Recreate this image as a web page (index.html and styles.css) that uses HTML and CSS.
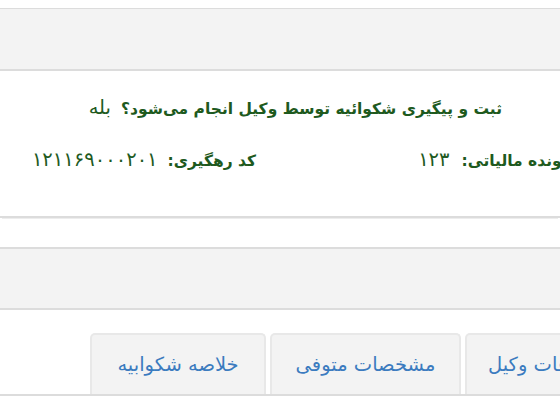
FILE: index.html
```html
<!DOCTYPE html>
<html lang="fa" dir="rtl">
<head>
<meta charset="utf-8">
<link rel="stylesheet" href="styles.css">
</head>
<body>
<div class="page">
  <div class="band band-top"></div>
  <div class="info">
    <div class="question">
      <span class="label">ثبت و پیگیری شکوائیه توسط وکیل انجام می‌شود؟</span>
      <span class="value">بله</span>
    </div>
    <div class="fields">
      <div class="field field-wide">
        <span class="label">شماره پرونده مالیاتی:</span>
        <span class="value value-wide">۱۲۳</span>
      </div>
      <div class="field">
        <span class="label">کد رهگیری:</span>
        <span class="value">۱۲۱۱۶۹۰۰۰۲۰۱</span>
      </div>
    </div>
  </div>
  <div class="band band-mid"></div>
  <ul class="tabs">
    <li class="tab tab-agent">اطلاعات وکیل</li>
    <li class="tab tab-deceased">مشخصات متوفی</li>
    <li class="tab tab-summary">خلاصه شکوابیه</li>
  </ul>
</div>
</body>
</html>
```
FILE: styles.css
```css
html, body {
  margin: 0;
  padding: 0;
  background: #fff;
}
body {
  width: 560px;
  height: 414px;
  overflow: hidden;
  font-family: "DejaVu Sans", "Noto Sans", sans-serif;
}
.page {
  direction: rtl;
  padding-top: 8px;
}
.band {
  background: #f3f3f3;
  border-top: 1px solid #dcdcdc;
  border-bottom: 2px solid #dcdcdc;
  height: 60px;
}
.band-mid {
  border-top-width: 2px;
  height: 59px;
  margin-top: 29px;
}
.info {
  height: 145px;
  border-bottom: 2px solid #dcdcdc;
  box-shadow: 0 3px 0 -2px #ededed;
  color: #1e5a1e;
  font-size: 15.5px;
}
.question {
  padding-right: 58px;
  padding-top: 25px;
  line-height: 24px;
  display: flex;
  align-items: baseline;
}
.label {
  font-weight: bold;
  white-space: nowrap;
}
.value {
  font-size: 19.5px;
  margin-right: 10px;
  white-space: nowrap;
}
.fields {
  display: flex;
  align-items: baseline;
  margin-top: 27px;
  margin-right: -72px;
  line-height: 24px;
}
.field {
  display: flex;
  align-items: baseline;
}
.field-wide {
  width: 376px;
  flex-shrink: 0;
}
.value-wide {
  margin-right: 12px;
}
.tabs {
  list-style: none;
  margin: 23px -65px 0 0;
  padding: 0;
  display: flex;
  gap: 4px;
  border-bottom: 2px solid #dcdcdc;
  height: 61px;
}
.tab {
  background: #f3f3f3;
  border: 2px solid #e8e8e8;
  border-bottom: none;
  border-radius: 5px 5px 0 0;
  color: #3b7bbf;
  font-size: 19.5px;
  box-sizing: border-box;
  height: 61px;
  display: flex;
  align-items: center;
  justify-content: center;
  white-space: nowrap;
  flex-shrink: 0;
}
.tab-agent {
  width: 160px;
}
.tab-deceased {
  width: 191px;
}
.tab-summary {
  width: 176px;
}
```
